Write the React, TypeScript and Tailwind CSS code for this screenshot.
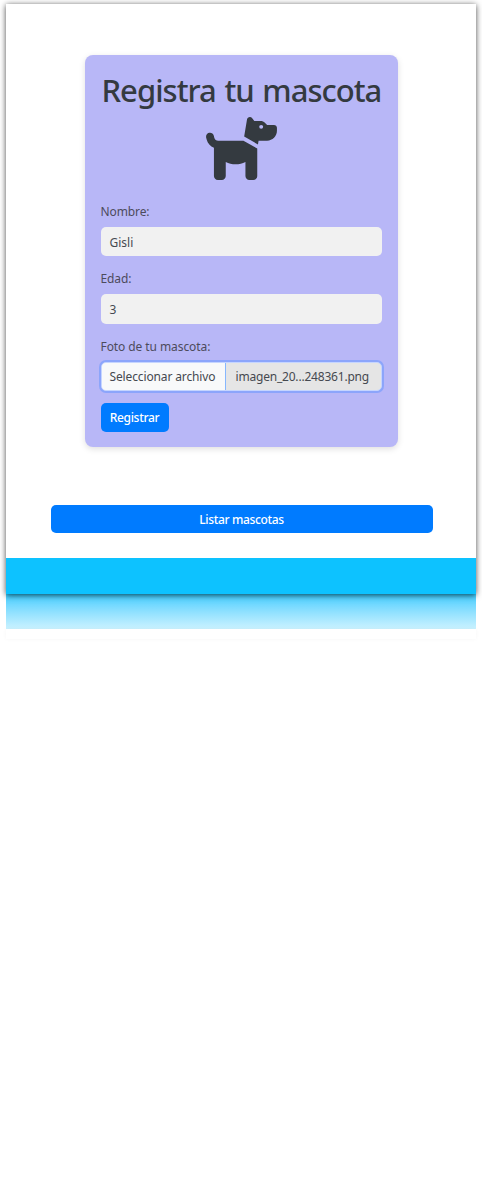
import { FaDog } from "react-icons/fa6";

function Field({ label, value }: { label: string; value: string }) {
  return (
    <div className="mb-[14px]">
      <label className="mb-[6px] block h-[18px] text-[12px] leading-[18px] tracking-[-0.1px] text-[#4d4b5c]">{label}</label>
      <div className="flex h-[29.5px] items-center rounded-[5px] bg-[#f1f1f1] px-[9px] pt-[3px] text-[12px]">{value}</div>
    </div>
  );
}

export default function App() {
  return (
    <div className="h-[1188px] overflow-hidden bg-white px-[6px] pt-[4px] font-['Noto_Sans','Open_Sans',sans-serif] text-[12px] text-[#454950]">
      <div className="relative z-10 flex h-[590px] flex-col shadow-[0_1px_6px_rgba(0,0,0,0.7)]">
        <main className="flex h-[554px] flex-col items-center bg-white pt-[51px]">
          <section className="h-[392px] w-[313px] rounded-[8px] bg-[#b8b7f7] px-[16px] pt-[17px] shadow-[0_2px_6px_rgba(0,0,0,0.13)]">
            <h1 className="-mr-[4px] h-[42px] whitespace-nowrap pl-px text-[31px] font-medium leading-[37px] tracking-[-0.98px] text-[#343a40] [word-spacing:1.5px]">Registra tu mascota</h1>
            <FaDog className="mx-auto mb-[23px] mt-[2.5px] h-[63px] w-[71px] text-[#343a40]" />
            <Field label="Nombre:" value="Gisli" />
            <Field label="Edad:" value="3" />
            <label className="mb-[6px] block h-[18px] text-[12px] leading-[18px] tracking-[-0.08px] text-[#4d4b5c]">Foto de tu mascota:</label>
            <div className="flex h-[29.5px] overflow-hidden rounded-[5px] border border-[#c5d5ff] bg-[#e5e5e5] leading-[28px] shadow-[0_0_0_2px_#8ca5fb]">
              <span className="w-[124px] whitespace-nowrap border-r border-[#86b7fe] bg-[#f8f9fa] pl-[8px] tracking-[-0.13px]">Seleccionar archivo</span>
              <span className="whitespace-nowrap pl-[10px] tracking-[-0.2px]">imagen_20...248361.png</span>
            </div>
            <button className="mt-[12px] block h-[29px] w-[68px] rounded-[5px] bg-[#007bff] pt-px font-medium tracking-[-0.3px] text-white">Registrar</button>
          </section>
          <button className="ml-px mt-[58px] h-[28px] w-[382px] rounded-[5px] bg-[#007bff] pt-px font-medium tracking-[-0.35px] text-white">Listar mascotas</button>
        </main>
        <footer className="h-[36px] bg-[#0dc2ff]" />
      </div>
      <div className="h-[35px] bg-linear-to-b from-[#38cdff] to-[#caf2ff]" />
      <div className="h-[10px] shadow-[0_0_4px_rgba(0,0,0,0.04)]" />
    </div>
  );
}
